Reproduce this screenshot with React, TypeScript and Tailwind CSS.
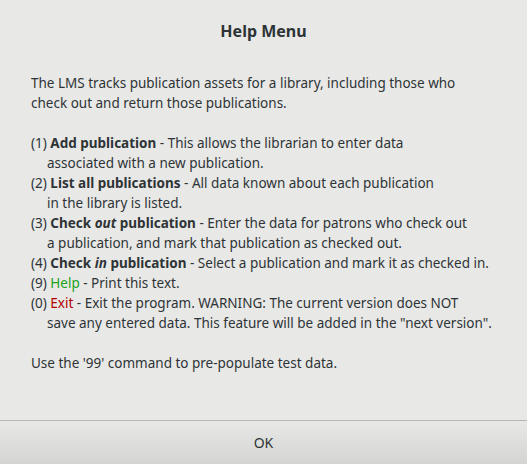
export default function App() {
  return (
    <div
      className="flex h-[464px] w-[527px] flex-col bg-[#e8e8e7] text-[#2e3436]"
      style={{ fontFamily: '"Noto Sans", "Open Sans", sans-serif' }}
    >
      <div className="flex-1 px-[31px]">
        <h1 className="mt-[19px] h-[24px] text-center text-[16px] font-bold leading-[24px]">
          Help Menu
        </h1>
        <div className="mt-[30px] whitespace-nowrap text-[13.5px] leading-[20px]">
          <p>
            The LMS tracks publication assets for a library, including those who
            <br />
            check out and return those publications.
          </p>
          <div className="mt-[20px]">
            <p>
              (1) <b>Add publication</b> - This allows the librarian to enter data
            </p>
            <p className="pl-[16px]">associated with a new publication.</p>
            <p>
              (2) <b>List all publications</b> - All data known about each publication
            </p>
            <p className="pl-[16px]">in the library is listed.</p>
            <p>
              (3){" "}
              <b>
                Check <i>out</i> publication
              </b>{" "}
              - Enter the data for patrons who check out
            </p>
            <p className="pl-[16px]">a publication, and mark that publication as checked out.</p>
            <p>
              (4){" "}
              <b>
                Check <i>in</i> publication
              </b>{" "}
              - Select a publication and mark it as checked in.
            </p>
            <p>
              (9) <span className="text-[#1aa31a]">Help</span> - Print this text.
            </p>
            <p>
              (0) <span className="text-[#b30000]">Exit</span> - Exit the program. WARNING: The current version does NOT
            </p>
            <p className="pl-[16px]">
              save any entered data. This feature will be added in the "next version".
            </p>
          </div>
          <p className="mt-[20px]">Use the '99' command to pre-populate test data.</p>
        </div>
      </div>
      <div className="border-t border-[#b8b8b5] bg-gradient-to-b from-[#e8e8e7] to-[#d4d4d2]">
        <button className="flex h-[43px] w-full items-center justify-center text-[14px] text-[#2e3436]">
          OK
        </button>
      </div>
    </div>
  );
}
